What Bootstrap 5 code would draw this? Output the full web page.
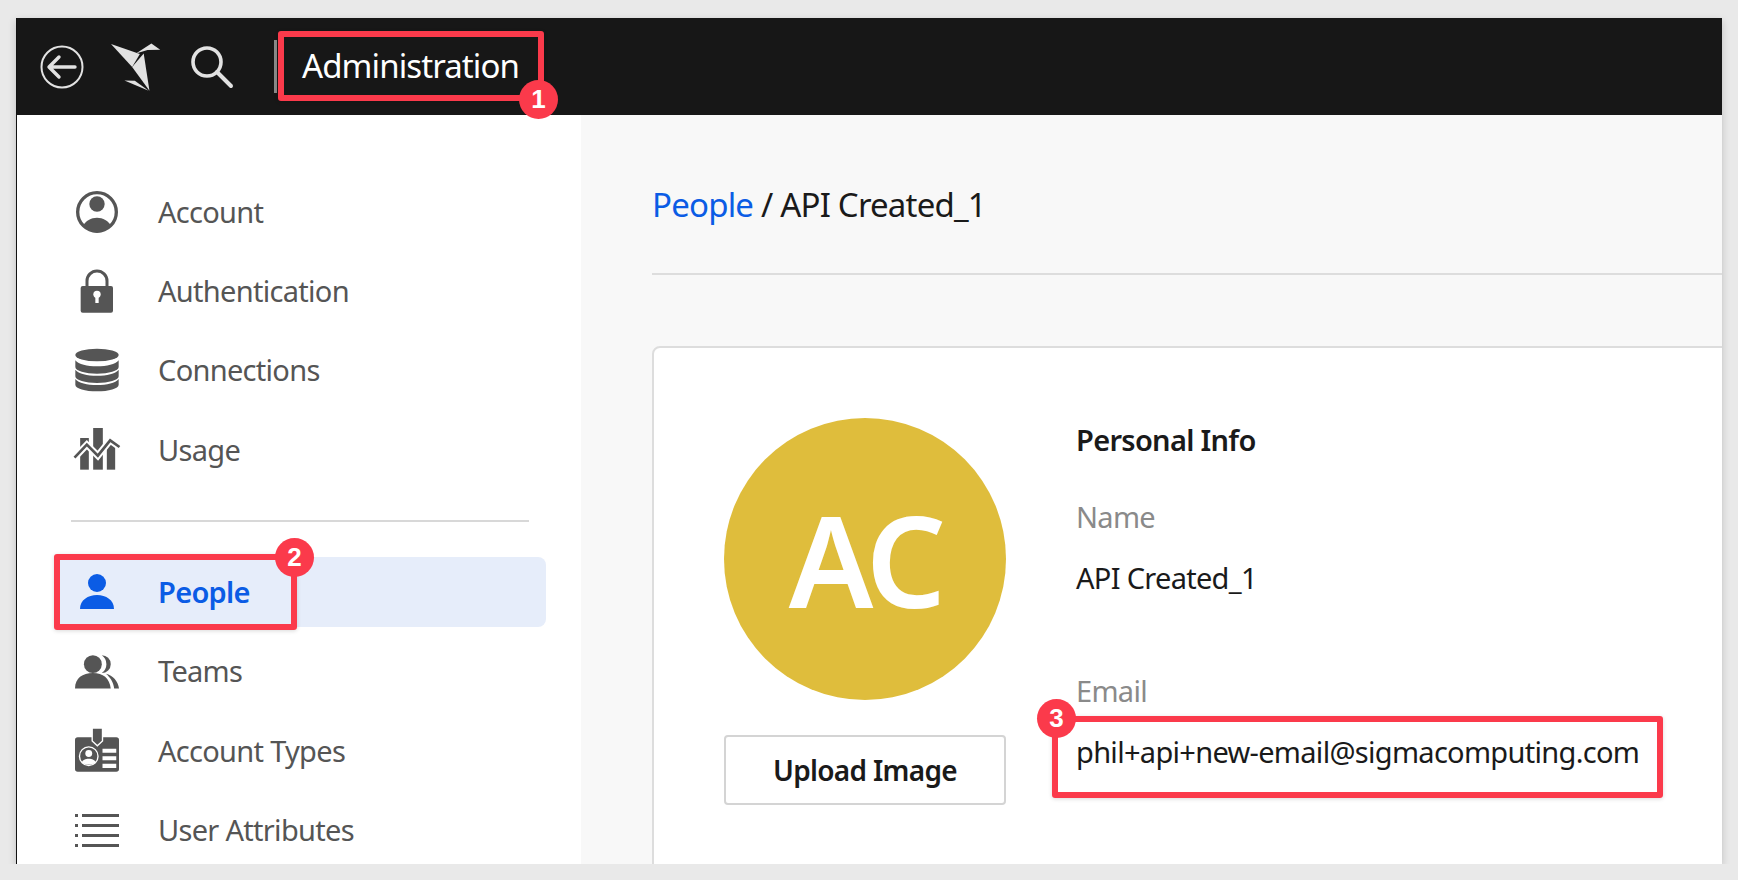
<!DOCTYPE html>
<html lang="en">
<head>
<meta charset="UTF-8">
<title>Administration</title>
<link rel="stylesheet" href="https://cdn.jsdelivr.net/npm/bootstrap@5.3.3/dist/css/bootstrap.min.css">
<style>
body { background: #e9e9e9; font-family: "Noto Sans", "Liberation Sans", sans-serif; overflow: hidden; }
.app-window { width: 1706px; height: 846px; margin: 18px 0 0 16px; background: #fff; border-left: 1px solid #111; box-shadow: 0 3px 8px rgba(0,0,0,.18); overflow: hidden; position: relative; }
.app-top { height: 97px; background: #171717; padding-left: 20px; }
.app-top svg { display: block; flex: none; }
.logo-mark { margin-left: 22px; }
.find-mark { margin-left: 25px; }
.top-sep { width: 3px; height: 53px; background: #8a8a8a; margin-left: 38px; }
.top-title { color: #fff; font-size: 33px; letter-spacing: -.9px; margin-left: 25px; margin-top: -2px; }
.app-body { height: 749px; }
.side { width: 564px; flex: none; padding: 62px 35px 0 40px; }
.side .nav-link { height: 70px; margin-bottom: 9.3px; padding: 0 0 1px 18px; color: #555; font-size: 29px; letter-spacing: -.7px; border-radius: 8px; }
.side .nav-link svg { width: 44px; height: 44px; margin-right: 39px; flex: none; overflow: visible; }
.side .nav-link.active { background: #e6edfa; color: #0b5ce5; font-weight: 600; }
.side-rule { border-top: 2px solid #d8d8d8; margin: 26px 17px 35px 14px; opacity: 1; }
.main-pane { background: #f8f8f8; flex: 1; padding: 0 0 0 71px; overflow: hidden; }
.crumbs { font-size: 33px; letter-spacing: -.8px; height: 160px; padding-top: 67px; line-height: 46px; border-bottom: 2px solid #ddd; color: #1a1a1a; }
.crumbs a { color: #0b5ce5; text-decoration: none; }
.info-card { width: 1200px; margin-top: 71px; height: 600px; border: 2px solid #ddd; border-radius: 8px; background: #fff; padding: 70px 0 0 70px; gap: 70px; }
.avatar-col { width: 282px; }
.avatar-disc { width: 282px; height: 282px; border-radius: 50%; background: #dfbd3c; color: #fff; font-size: 126px; font-weight: 600; letter-spacing: -5px; }
.upload-btn { width: 282px; height: 70px; margin-top: 35px; background: #fff; border: 2px solid #d4d4d4; border-radius: 4px; font-size: 28px; font-weight: 600; letter-spacing: -.7px; color: #1a1a1a; padding: 0; }
.info-col { font-size: 29px; letter-spacing: -.7px; color: #1a1a1a; line-height: 40px; }
.info-head { font-weight: 600; margin-top: 2px; margin-bottom: 37px; }
.info-label { color: #8a8a8a; margin-bottom: 21px; }
.info-value { margin-bottom: 73px; }
.note-box { position: absolute; border: 6px solid #fb3a4b; border-radius: 3px; box-shadow: 0 1px 4px rgba(0,0,0,.15); }
.note-dot { position: absolute; width: 39px; height: 39px; border-radius: 50%; background: #fb3a4b; color: #fff; font-family: "Liberation Sans", sans-serif; font-weight: 700; font-size: 26px; }
</style>
</head>
<body>
<div class="app-window">
  <div class="app-top d-flex align-items-center">
    <svg width="50" height="50" viewBox="0 0 50 50" fill="none" stroke="#e2e2e2"><circle cx="25" cy="25" r="20.5" stroke-width="2"/><path d="M38 25H13M22 15l-10 10 10 10" stroke-width="3.4" stroke-linecap="round" stroke-linejoin="round"/></svg>
    <svg class="logo-mark" width="54" height="50" viewBox="285 135 140 130"><g fill="#e2e2e2"><path d="M290 140l75 26-20 34z"/><path d="M345 200l30-35 15 97z"/><path d="M325 235l63 27-36-26z"/><path d="M355 165l40-26 23 16-33 1z"/></g></svg>
    <svg class="find-mark" width="48" height="48" viewBox="0 0 48 48" fill="none" stroke="#e2e2e2"><circle cx="19" cy="19" r="14" stroke-width="3.6"/><path d="M29 29l14 14" stroke-width="4" stroke-linecap="round"/></svg>
    <div class="top-sep"></div>
    <div class="top-title">Administration</div>
  </div>
  <div class="app-body d-flex">
    <div class="side">
      <nav class="nav flex-column">
        <a class="nav-link d-flex align-items-center" href="#"><svg viewBox="76 58 132 132" fill="#555"><circle cx="142" cy="124" r="58" fill="none" stroke="#555" stroke-width="10"/><circle cx="142" cy="100" r="23"/><path d="M100 165c8-15 24-24 42-24s34 9 42 24c-10 12-26 20-42 20s-32-8-42-20z"/></svg>Account</a>
        <a class="nav-link d-flex align-items-center" href="#"><svg viewBox="76 294 132 132" fill="#555"><path d="M112 345v-15a30 30 0 0 1 60 0v15" fill="none" stroke="#555" stroke-width="9"/><rect x="93" y="345" width="97" height="80" rx="6"/><circle cx="142" cy="370" r="11" fill="#fff"/><rect x="137" y="372" width="10" height="24" fill="#fff"/></svg>Authentication</a>
        <a class="nav-link d-flex align-items-center" href="#"><svg viewBox="76 535 132 132" fill="#555"><ellipse cx="142" cy="556" rx="65" ry="19"/><path id="dbBand" d="M77 572c10 12 35 18 65 18s55-6 65-18v20c0 12-30 20-65 20s-65-8-65-20z"/><use href="#dbBand" y="28"/><path d="M77 628c10 12 35 18 65 18s55-6 65-18v17c0 12-30 20-65 20s-65-8-65-20z"/></svg>Connections</a>
        <a class="nav-link d-flex align-items-center" href="#"><svg viewBox="77 772 131 132" fill="#555"><rect x="92" y="805" width="26" height="95"/><rect x="131" y="775" width="29" height="125"/><rect x="172" y="825" width="25" height="75"/><path d="M75 864l37-39 33 33 37-46 28 20" fill="none" stroke="#fff" stroke-width="20"/><path d="M75 864l37-39 33 33 37-46 28 20" fill="none" stroke="#555" stroke-width="8"/></svg>Usage</a>
      </nav>
      <hr class="side-rule">
      <nav class="nav flex-column">
        <a class="nav-link active d-flex align-items-center" href="#"><svg viewBox="0 0 44 44" fill="#0b5ce5"><circle cx="22" cy="13" r="9"/><path d="M5 39c0-9 8-14 17-14s17 5 17 14z"/></svg>People</a>
        <a class="nav-link d-flex align-items-center" href="#"><svg viewBox="108 388 128 128" fill="#555"><circle cx="160" cy="432" r="26"/><path d="M108 503c0-30 22-45 52-45s48 15 52 45z"/><path d="M186 406a26 26 0 0 1 0 52 32 32 0 0 0 0-52z"/><path d="M198 460c20 5 36 22 38 43h-14c-2-18-12-33-24-43z"/></svg>Teams</a>
        <a class="nav-link d-flex align-items-center" href="#"><svg viewBox="108 628 128 128" fill="#555"><rect x="108" y="655" width="128" height="100" rx="8"/><path d="M158 628h30v38l-15 14-15-14z" stroke="#fff" stroke-width="4"/><circle cx="148" cy="710" r="27" fill="none" stroke="#fff" stroke-width="4"/><circle cx="148" cy="702" r="10" fill="#fff"/><path d="M128 728c3-14 37-14 40 0-10 8-30 8-40 0z" fill="#fff"/><path d="M188 688h40v12h-40zM188 710h40v12h-40zM188 732h40v12h-40z" fill="#fff"/></svg>Account Types</a>
        <a class="nav-link d-flex align-items-center" href="#"><svg viewBox="0 0 44 44" fill="#555"><path d="M0 6h3v3H0zM7 6h37v3H7zM0 16h3v3H0zM7 16h37v3H7zM0 26h3v3H0zM7 26h37v3H7zM0 36h3v3H0zM7 36h37v3H7z"/></svg>User Attributes</a>
      </nav>
    </div>
    <div class="main-pane">
      <div class="crumbs"><a href="#">People</a> / API Created_1</div>
      <div class="info-card d-flex">
        <div class="avatar-col">
          <div class="avatar-disc d-flex align-items-center justify-content-center">AC</div>
          <button type="button" class="btn upload-btn">Upload Image</button>
        </div>
        <div class="info-col">
          <div class="info-head">Personal Info</div>
          <div class="info-label">Name</div>
          <div class="info-value">API Created_1</div>
          <div class="info-label">Email</div>
          <div>phil+api+new-email@sigmacomputing.com</div>
        </div>
      </div>
    </div>
  </div>
  <div class="note-box" style="left:261px;top:13px;width:266px;height:70px"></div>
  <div class="note-dot d-flex align-items-center justify-content-center" style="left:502px;top:62px">1</div>
  <div class="note-box" style="left:37px;top:536px;width:243px;height:76px"></div>
  <div class="note-dot d-flex align-items-center justify-content-center" style="left:258px;top:520px">2</div>
  <div class="note-box" style="left:1035px;top:698px;width:611px;height:82px"></div>
  <div class="note-dot d-flex align-items-center justify-content-center" style="left:1020px;top:681px">3</div>
</div>
<script src="https://cdn.jsdelivr.net/npm/bootstrap@5.3.3/dist/js/bootstrap.bundle.min.js"></script>
</body>
</html>
